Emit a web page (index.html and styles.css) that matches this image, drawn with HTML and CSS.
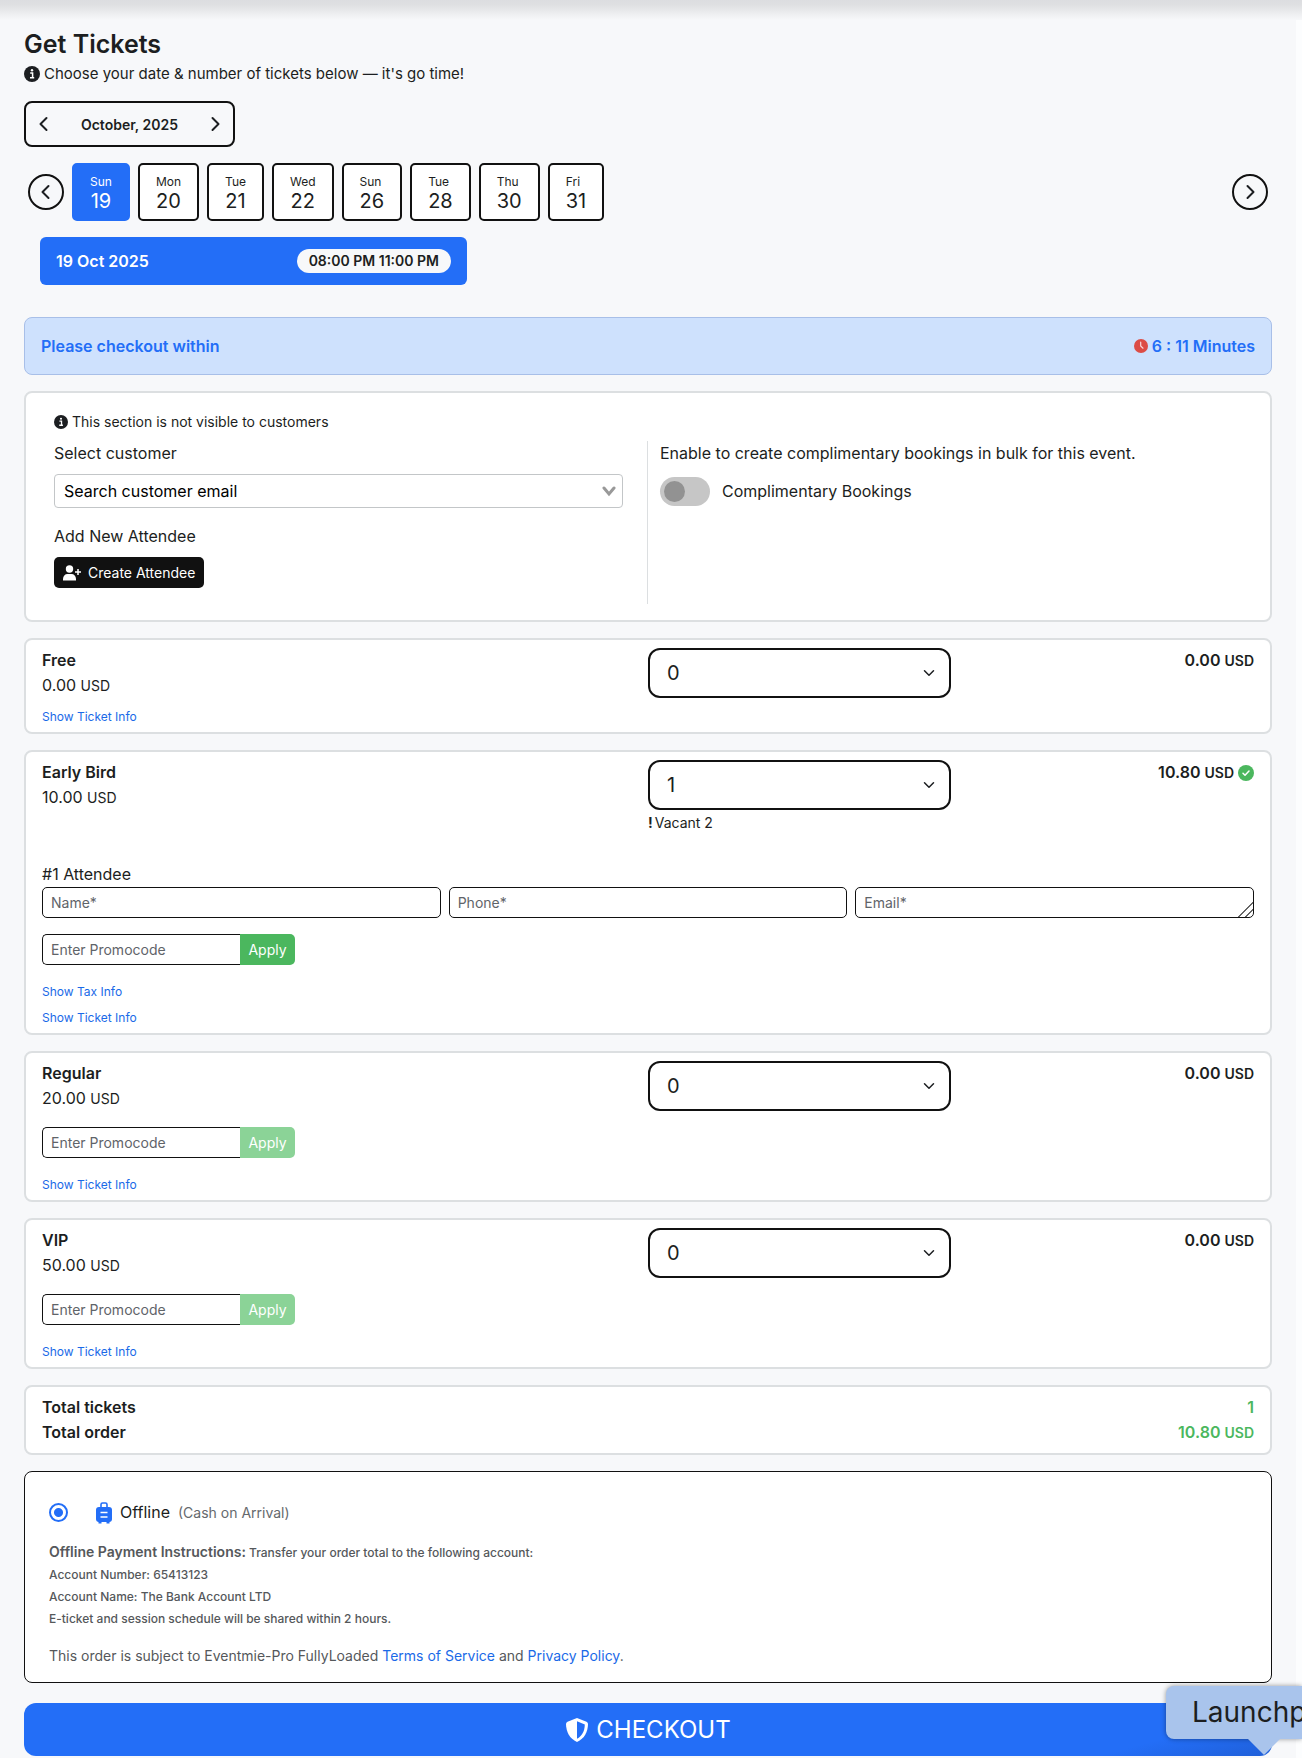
FILE: index.html
```html
<!DOCTYPE html>
<html lang="en">
<head>
    <meta charset="UTF-8">
    <meta name="viewport" content="width=device-width, initial-scale=1.0">
    <title>Get Tickets</title>
    <link rel="stylesheet" href="styles.css">
</head>
<body>
    <svg class="sprite" aria-hidden="true">
        <symbol id="i-info" viewBox="0 0 16 16">
            <circle cx="8" cy="8" r="8" fill="currentColor"/>
            <circle cx="8" cy="4.3" r="1.2" fill="#fff"/>
            <path d="M6.2 7h2.4v4.6M6 11.7h4.2" fill="none" stroke="#fff" stroke-width="1.5"/>
        </symbol>
        <symbol id="i-left" viewBox="0 0 16 16">
            <path d="M10.5 2l-6 6 6 6" fill="none" stroke="currentColor" stroke-width="2" stroke-linecap="round" stroke-linejoin="round"/>
        </symbol>
        <symbol id="i-right" viewBox="0 0 16 16">
            <path d="M5.5 2l6 6-6 6" fill="none" stroke="currentColor" stroke-width="2" stroke-linecap="round" stroke-linejoin="round"/>
        </symbol>
        <symbol id="i-down" viewBox="0 0 16 16">
            <path d="M2 5l6 6 6-6" fill="none" stroke="currentColor" stroke-width="2" stroke-linecap="round" stroke-linejoin="round"/>
        </symbol>
    </svg>

    <main class="tickets">
        <header>
            <h1>Get Tickets</h1>
            <p class="intro"><svg class="icon"><use href="#i-info"/></svg> Choose your date &amp; number of tickets below — it's go time!</p>
        </header>

        <div class="month">
            <button type="button" aria-label="Previous month"><svg class="icon"><use href="#i-left"/></svg></button>
            <strong>October, 2025</strong>
            <button type="button" aria-label="Next month"><svg class="icon"><use href="#i-right"/></svg></button>
        </div>

        <div class="dates">
            <button type="button" class="round" aria-label="Previous dates"><svg class="icon"><use href="#i-left"/></svg></button>
            <div class="days">
                <button type="button" class="day active"><small>Sun</small>19</button>
                <button type="button" class="day"><small>Mon</small>20</button>
                <button type="button" class="day"><small>Tue</small>21</button>
                <button type="button" class="day"><small>Wed</small>22</button>
                <button type="button" class="day"><small>Sun</small>26</button>
                <button type="button" class="day"><small>Tue</small>28</button>
                <button type="button" class="day"><small>Thu</small>30</button>
                <button type="button" class="day"><small>Fri</small>31</button>
            </div>
            <button type="button" class="round" aria-label="Next dates"><svg class="icon"><use href="#i-right"/></svg></button>
        </div>

        <button type="button" class="slot">19 Oct 2025 <span class="time">08:00 PM 11:00 PM</span></button>

        <div class="timer">
            <span>Please checkout within</span>
            <span class="countdown">
                <svg class="icon-small" viewBox="0 0 14 14"><circle cx="7" cy="7" r="7" fill="#dc4c46"/><path d="M6.7 3.2V7L9 9.2" fill="none" stroke="#f8d7da" stroke-width="1.2" stroke-linecap="round"/></svg>
                6 : 11 Minutes
            </span>
        </div>

        <form class="booking">
            <section class="card customer">
                <p class="note"><svg class="icon-small"><use href="#i-info"/></svg> This section is not visible to customers</p>
                <div class="customer-cols">
                    <div class="customer-col">
                        <label for="customer">Select customer</label>
                        <div class="select-wrap search">
                            <select id="customer"><option>Search customer email</option></select>
                            <svg class="caret" viewBox="0 0 14 12"><path d="M2 3l5 6 5-6" fill="none" stroke="#999" stroke-width="3" stroke-linecap="round"/></svg>
                        </div>
                        <p>Add New Attendee</p>
                        <button type="button" class="btn-dark">
                            <svg viewBox="0 0 18 16" width="18" height="16"><circle cx="6.5" cy="4" r="3.7" fill="#fff"/><path d="M0 15.500V14c0-3 2-5 4.500-5h4c2.500 0 4.500 2 4.500 5v1.500z" fill="#fff"/><path d="M15 4v6M12 7h6" stroke="#fff" stroke-width="1.5"/></svg>
                            Create Attendee
                        </button>
                    </div>
                    <div class="customer-col">
                        <p>Enable to create complimentary bookings in bulk for this event.</p>
                        <label class="toggle"><input type="checkbox"> Complimentary Bookings</label>
                    </div>
                </div>
            </section>

            <section class="card">
                <div class="ticket">
                    <div><h2>Free</h2><p>0.00 <small>USD</small></p></div>
                    <div class="select-wrap qty">
                        <select aria-label="Free quantity"><option>0</option><option>1</option></select>
                        <svg class="caret"><use href="#i-down"/></svg>
                    </div>
                    <strong class="amount">0.00 <small>USD</small></strong>
                </div>
                <a href="#" class="more">Show Ticket Info</a>
            </section>

            <section class="card">
                <div class="ticket">
                    <div><h2>Early Bird</h2><p>10.00 <small>USD</small></p></div>
                    <div>
                        <div class="select-wrap qty">
                            <select aria-label="Early Bird quantity"><option>1</option><option>0</option></select>
                            <svg class="caret"><use href="#i-down"/></svg>
                        </div>
                        <p class="vacant"><b>!</b>Vacant 2</p>
                    </div>
                    <strong class="amount">10.80 <small>USD</small>
                        <svg class="icon" viewBox="0 0 16 16"><circle cx="8" cy="8" r="8" fill="#4bb75e"/><path d="M5 8.2l2 2L11 6" fill="none" stroke="#fff" stroke-width="1.5" stroke-linecap="round" stroke-linejoin="round"/></svg>
                    </strong>
                </div>
                <fieldset class="attendee">
                    <legend>#1 Attendee</legend>
                    <div class="attendee-fields">
                        <input type="text" class="field" placeholder="Name*" aria-label="Name">
                        <input type="tel" class="field" placeholder="Phone*" aria-label="Phone">
                        <textarea class="field" rows="1" placeholder="Email*" aria-label="Email"></textarea>
                    </div>
                </fieldset>
                <div class="promo">
                    <input type="text" class="field" placeholder="Enter Promocode" aria-label="Early Bird promocode">
                    <button type="button">Apply</button>
                </div>
                <a href="#" class="more">Show Tax Info</a>
                <a href="#" class="more">Show Ticket Info</a>
            </section>

            <section class="card">
                <div class="ticket">
                    <div><h2>Regular</h2><p>20.00 <small>USD</small></p></div>
                    <div class="select-wrap qty">
                        <select aria-label="Regular quantity"><option>0</option><option>1</option></select>
                        <svg class="caret"><use href="#i-down"/></svg>
                    </div>
                    <strong class="amount">0.00 <small>USD</small></strong>
                </div>
                <div class="promo">
                    <input type="text" class="field" placeholder="Enter Promocode" aria-label="Regular promocode">
                    <button type="button" disabled>Apply</button>
                </div>
                <a href="#" class="more">Show Ticket Info</a>
            </section>

            <section class="card">
                <div class="ticket">
                    <div><h2>VIP</h2><p>50.00 <small>USD</small></p></div>
                    <div class="select-wrap qty">
                        <select aria-label="VIP quantity"><option>0</option><option>1</option></select>
                        <svg class="caret"><use href="#i-down"/></svg>
                    </div>
                    <strong class="amount">0.00 <small>USD</small></strong>
                </div>
                <div class="promo">
                    <input type="text" class="field" placeholder="Enter Promocode" aria-label="VIP promocode">
                    <button type="button" disabled>Apply</button>
                </div>
                <a href="#" class="more">Show Ticket Info</a>
            </section>

            <section class="card totals">
                <div><span>Total tickets</span><span class="green">1</span></div>
                <div><span>Total order</span><span class="green">10.80 <small>USD</small></span></div>
            </section>

            <section class="payment">
                <label class="method">
                    <input type="radio" name="payment" checked>
                    <svg viewBox="0 0 16 22" width="16" height="22"><path d="M5 6V2.500Q5 1 6.500 1h3Q11 1 11 2.500V6" fill="none" stroke="#236ef7" stroke-width="1.600"/><rect y="5" width="16" height="15" rx="3" fill="#236ef7"/><path d="M2.500 19h3v2.500h-3zM10.500 19h3v2.500h-3z" fill="#236ef7"/><path d="M4.500 10.500h7M4.500 15h7" stroke="#fff" stroke-width="1.300"/></svg>
                    <span>Offline</span>
                    <span class="hint">(Cash on Arrival)</span>
                </label>
                <p class="instructions">
                    <strong>Offline Payment Instructions:</strong> Transfer your order total to the following account:<br>
                    Account Number: 65413123<br>
                    Account Name: The Bank Account LTD<br>
                    E-ticket and session schedule will be shared within 2 hours.
                </p>
                <p class="terms">This order is subject to Eventmie-Pro FullyLoaded <a href="#">Terms of Service</a> and <a href="#">Privacy Policy</a>.</p>
            </section>

            <button type="submit" class="checkout">
                <svg viewBox="0 0 24 24" width="24" height="24"><path d="M12 0l9.500 3.800Q23 4.500 23 6c-.2 8-3.500 14.500-11 18C4.500 20.500 1.200 14 1 6q0-1.500 1.500-2.200z" fill="#fff"/><path d="M12 3.300l7.800 3.100C19.700 13 17 18 12 20.700z" fill="#236ef7"/></svg>
                CHECKOUT
            </button>
        </form>
    </main>
    <div class="dock-tip">Launchp</div>
</body>
</html>
```
FILE: styles.css
```css
* {
    padding: 0;
    margin: 0;
    box-sizing: border-box;
}
body {
    font-family: Inter, "Liberation Sans", sans-serif;
    font-size: 16px;
    line-height: 25px;
    color: #1c1e21;
    background-color: #fcfdfe;
    padding-right: 6px;
    position: relative;
    overflow-x: hidden;
}
body::before {
    content: "";
    position: absolute;
    top: 0;
    left: 0;
    right: 0;
    height: 20px;
    background: linear-gradient(#dcdde0, #dfe0e2 25%, #f7f8fa);
}
button, input, select, textarea {
    font: inherit;
    color: inherit;
}
button {
    border: none;
    background: none;
    cursor: pointer;
}
h2 {
    font-size: 16px;
    font-weight: 600;
}
small {
    font-size: 14px;
}
a {
    color: #1a6ae8;
    text-decoration: none;
}
.sprite {
    display: none;
}
.icon {
    width: 16px;
    height: 16px;
    flex: none;
}
.icon-small {
    width: 14px;
    height: 14px;
    flex: none;
}
.tickets {
    background-color: #f7f8fa;
    padding: 28px 24px 3px;
}
h1 {
    font-size: 25px;
    line-height: 33px;
    font-weight: 600;
}
.intro {
    display: flex;
    align-items: center;
    gap: 4px;
    font-size: 15px;
}
.month {
    display: flex;
    align-items: center;
    justify-content: space-between;
    width: 211px;
    height: 46px;
    margin-top: 15px;
    padding: 0 10px;
    border: 2px solid #111;
    border-radius: 8px;
    font-size: 14px;
}
.month strong {
    font-weight: 600;
}
.month button, .round {
    display: flex;
    align-items: center;
    justify-content: center;
}
.dates {
    display: flex;
    align-items: center;
    gap: 8px;
    margin-top: 16px;
    padding: 0 4px;
}
.round {
    width: 36px;
    height: 36px;
    border: 2px solid #111;
    border-radius: 50%;
}
.days {
    display: flex;
    flex: 1;
    gap: 8px;
}
.day {
    height: 58px;
    padding: 0 16px;
    border: 2px solid #111;
    border-radius: 5px;
    background-color: #fff;
    font-size: 20px;
    line-height: 20px;
}
.day small {
    display: block;
    font-size: 12px;
    line-height: 18px;
    text-align: left;
}
.day.active, .slot {
    border-color: #236ef7;
    background-color: #236ef7;
    color: #fff;
}
.slot {
    display: flex;
    align-items: center;
    justify-content: space-between;
    width: 427px;
    height: 48px;
    margin: 16px 16px 32px;
    padding: 0 16px;
    border-radius: 6px;
    font-weight: 600;
}
.time {
    padding: 0 12px;
    border-radius: 12px;
    background-color: #f7f8fa;
    color: #1c1e21;
    font-size: 14px;
    line-height: 24px;
}
.timer {
    display: flex;
    justify-content: space-between;
    padding: 16px;
    border: 1px solid #a8bfe8;
    border-radius: 8px;
    background-color: #cee1fd;
    color: #236ef7;
    font-weight: 600;
    line-height: 24px;
}
.countdown {
    display: flex;
    align-items: center;
    gap: 4px;
}
.booking {
    display: flex;
    flex-direction: column;
    gap: 16px;
    margin-top: 16px;
}
.card {
    padding: 8px 16px 6px;
    border: 2px solid #dcdfe1;
    border-radius: 8px;
    background-color: #fff;
}
.customer {
    padding: 16px 30px 16px 28px;
}
.note {
    display: flex;
    align-items: center;
    gap: 4px;
    font-size: 14px;
}
.customer-cols {
    display: grid;
    grid-template-columns: 1fr 1fr;
    margin-top: 7px;
}
.customer-col {
    display: flex;
    flex-direction: column;
    align-items: flex-start;
    min-height: 163px;
    padding-right: 24px;
}
.customer-col + .customer-col {
    padding: 0 0 0 12px;
    border-left: 1px solid #dcdfe1;
}
.select-wrap {
    display: flex;
    position: relative;
    width: 100%;
}
.select-wrap select {
    appearance: none;
    width: 100%;
    background-color: #fff;
}
.select-wrap .caret {
    position: absolute;
    pointer-events: none;
}
.search {
    margin: 8px 0 16px;
}
.search select {
    height: 34px;
    padding: 0 9px;
    border: 1px solid #c3c6c8;
    border-radius: 4px;
    color: #000;
}
.search .caret {
    width: 14px;
    height: 12px;
    top: 11px;
    right: 7px;
}
.btn-dark {
    display: flex;
    align-items: center;
    gap: 7px;
    height: 31px;
    margin-top: 8px;
    padding: 0 9px;
    border-radius: 5px;
    background-color: #111;
    color: #fff;
    font-size: 14px;
}
.toggle {
    display: flex;
    align-items: center;
    gap: 12px;
    margin-top: 11px;
}
.toggle input {
    appearance: none;
    width: 50px;
    height: 29px;
    padding: 4px;
    border-radius: 15px;
    background-color: #c6c6c6;
}
.toggle input::before {
    content: "";
    display: block;
    width: 21px;
    height: 21px;
    border-radius: 50%;
    background-color: #929292;
}
.toggle input:checked::before {
    margin-left: auto;
}
.ticket {
    display: grid;
    grid-template-columns: 2fr 1fr 1fr;
    align-items: start;
}
.qty select {
    height: 50px;
    padding: 0 17px;
    border: 2px solid #111;
    border-radius: 12px;
    font-size: 20px;
}
.qty .caret {
    width: 12px;
    height: 12px;
    top: 19px;
    right: 16px;
}
.amount {
    display: flex;
    align-items: baseline;
    justify-content: flex-end;
    gap: 4px;
    font-weight: 600;
}
.amount .icon {
    align-self: center;
}
.vacant {
    display: flex;
    gap: 2px;
    font-size: 14px;
}
.attendee {
    margin-top: 27px;
    border: none;
}
.attendee-fields {
    display: grid;
    grid-template-columns: 1fr 1fr 1fr;
    gap: 8px;
}
.field {
    width: 100%;
    height: 31px;
    padding: 2px 8px;
    border: 1px solid #111;
    border-radius: 5px;
    background-color: #fff;
    font-size: 14px;
}
.field::placeholder {
    color: #5f6469;
}
.field::-webkit-resizer {
    background: linear-gradient(135deg, transparent 49%, #666 49%, #666 55%, transparent 55%, transparent 72%, #666 72%, #666 78%, transparent 78%);
}
.promo {
    display: flex;
    width: 253px;
    margin: 16px 0 18px;
}
.promo .field {
    flex: 1;
    min-width: 0;
    border-right: none;
    border-radius: 5px 0 0 5px;
}
.promo button {
    width: 55px;
    border-radius: 0 5px 5px 0;
    background-color: #4bb75e;
    color: #fff;
    font-size: 14px;
}
.promo button:disabled {
    background-color: #8bd397;
}
.more {
    display: block;
    width: fit-content;
    margin-top: 10px;
    font-size: 12px;
    line-height: 18px;
}
.more + .more {
    margin-top: 8px;
}
.totals {
    padding-bottom: 8px;
    font-weight: 600;
}
.totals div {
    display: flex;
    justify-content: space-between;
}
.green {
    color: #4bb75e;
}
.payment {
    padding: 28px 24px 14px;
    border: 1px solid #111;
    border-radius: 8px;
    background-color: #fff;
    color: #55585b;
}
.method {
    display: flex;
    align-items: center;
    gap: 8px;
    color: #1c1e21;
}
.method input {
    appearance: none;
    width: 19px;
    height: 19px;
    margin-right: 20px;
    border: 2px solid #236ef7;
    border-radius: 50%;
}
.method input:checked {
    background: radial-gradient(circle, #236ef7 4px, #fff 5px);
}
.hint {
    color: #65696d;
    font-size: 14px;
}
.instructions {
    margin-top: 16px;
    font-size: 12px;
    font-weight: 500;
    line-height: 22px;
}
.instructions strong {
    font-size: 14px;
    font-weight: 600;
}
.terms {
    margin-top: 13px;
    font-size: 14px;
}
.checkout {
    display: flex;
    align-items: center;
    justify-content: center;
    gap: 7px;
    height: 53px;
    margin-top: 4px;
    border-radius: 12px;
    background: linear-gradient(165deg, #236ef7 88%, #1f5fd8);
    color: #fff;
    font-size: 24px;
}
/* dock label hanging over the corner of the page */
.dock-tip {
    position: absolute;
    right: 0;
    bottom: 20px;
    width: 136px;
    padding: 10px 0 10px 26px;
    border-radius: 8px 0 0 8px;
    background-color: #a9c4ec;
    box-shadow: 0 0 5px rgba(0, 0, 0, 0.4);
    font-size: 28px;
    line-height: 33px;
}
.dock-tip::after {
    content: "";
    position: absolute;
    top: 100%;
    left: 82px;
    border: 16px solid transparent;
    border-top-color: #a9c4ec;
    border-bottom: none;
}
```
